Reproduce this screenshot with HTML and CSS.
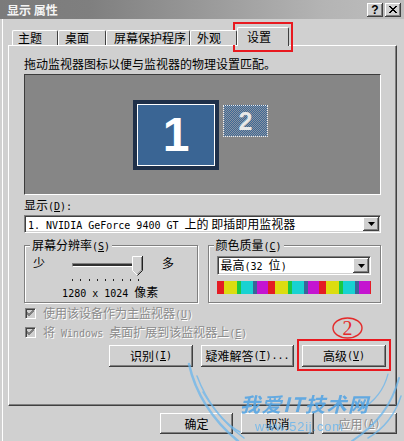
FILE: index.html
```html
<!DOCTYPE html>
<html lang="zh-CN">
<head>
    <meta charset="UTF-8">
    <meta name="viewport" content="width=device-width, initial-scale=1.0">
    <title>显示 属性</title>
    <link rel="stylesheet" href="styles.css">
</head>
<body>
    <div class="window">
        <div class="titlebar">
            <span class="title">显示 属性</span>
            <div class="title-buttons">
                <span class="title-btn">?</span>
                <span class="title-btn">
                    <svg width="8" height="7" viewBox="0 0 8 7"><path d="M0 0 L7 7 M1 0 L8 7 M7 0 L0 7 M8 0 L1 7" stroke="#000" stroke-width="1" fill="none"/></svg>
                </span>
            </div>
        </div>

        <div class="dialog">
            <div class="tabs">
                <div class="tab tab-theme">主题</div>
                <div class="tab tab-desktop">桌面</div>
                <div class="tab tab-saver">屏幕保护程序</div>
                <div class="tab tab-look">外观</div>
                <div class="tab active">设置</div>
            </div>

            <div class="panel">
                <p class="hint">拖动监视器图标以便与监视器的物理设置匹配。</p>

                <div class="preview">
                    <div class="monitor monitor-main">
                        <div class="screen">1</div>
                    </div>
                    <div class="monitor monitor-second">2</div>
                </div>

                <div class="field-label">显示<span class="m">(<u>D</u>):</span></div>
                <div class="combo">
                    <div class="combo-text"><span class="m">1. NVIDIA GeForce 9400 GT </span>上的 即插即用监视器</div>
                    <div class="combo-arrow">
                        <svg width="7" height="4" viewBox="0 0 7 4"><path d="M0 0 H7 L3.5 4 Z" fill="#000"/></svg>
                    </div>
                </div>

                <div class="groups">
                    <div class="group">
                        <div class="group-title">屏幕分辨率<span class="m">(<u>S</u>)</span></div>
                        <div class="slider-row">
                            <span>少</span>
                            <div class="slider">
                                <div class="track"></div>
                                <svg class="thumb" width="11" height="20" viewBox="0 0 11 20">
                                    <path d="M0.5 0.5 H10.5 V14.5 L5.5 19.5 L0.5 14.5 Z" fill="#d0d0d0"/>
                                    <path d="M0.5 14.5 V0.5 H10" stroke="#fff" fill="none"/>
                                    <path d="M0.5 14.5 L5 19" stroke="#fff" fill="none"/>
                                    <path d="M10.5 0 V14.5 L5.5 19.5" stroke="#202020" fill="none"/>
                                    <path d="M9.5 1 V14 L5.5 18" stroke="#808080" fill="none"/>
                                </svg>
                            </div>
                            <span class="more">多</span>
                        </div>
                        <div class="ticks">
                            <span></span><span></span><span></span><span></span><span></span>
                            <span></span><span></span><span></span><span></span>
                        </div>
                        <div class="res-text"><span class="m">1280 x 1024 </span>像素</div>
                    </div>

                    <div class="group">
                        <div class="group-title">颜色质量<span class="m">(<u>C</u>)</span></div>
                        <div class="combo combo-color">
                            <div class="combo-text">最高<span class="m">(32 </span>位<span class="m">)</span></div>
                            <div class="combo-arrow">
                                <svg width="7" height="4" viewBox="0 0 7 4"><path d="M0 0 H7 L3.5 4 Z" fill="#000"/></svg>
                            </div>
                        </div>
                        <div class="colorbar"></div>
                    </div>
                </div>

                <div class="check first">
                    <span class="checkbox">
                        <svg width="7" height="7" viewBox="0 0 7 7"><path d="M0 2 L2 4 L7 -1 M0 3 L2 5 L7 0 M0 4 L2 6 L7 1" stroke="#808080" fill="none"/></svg>
                    </span>
                    <span>使用该设备作为主监视器<span class="m">(<u>U</u>)</span></span>
                </div>
                <div class="check">
                    <span class="checkbox">
                        <svg width="7" height="7" viewBox="0 0 7 7"><path d="M0 2 L2 4 L7 -1 M0 3 L2 5 L7 0 M0 4 L2 6 L7 1" stroke="#808080" fill="none"/></svg>
                    </span>
                    <span>将<span class="m"> Windows </span>桌面扩展到该监视器上<span class="m">(<u>E</u>)</span></span>
                </div>

                <div class="panel-buttons">
                    <button class="btn btn-identify">识别<span class="m">(<u>I</u>)</span></button>
                    <button class="btn btn-trouble">疑难解答<span class="m">(<u>T</u>)...</span></button>
                    <button class="btn btn-advanced">高级<span class="m">(<u>V</u>)</span></button>
                </div>
            </div>

            <div class="dialog-buttons">
                <button class="btn btn-small">确定</button>
                <button class="btn btn-small">取消</button>
                <button class="btn btn-apply disabled">应用<span class="m">(<u>A</u>)</span></button>
            </div>
        </div>

        <!-- annotations drawn on top of the screenshot -->
        <div class="mark mark-tab"></div>
        <div class="mark mark-advanced"></div>
        <svg class="mark-step" width="33" height="24" viewBox="0 0 33 24">
            <ellipse cx="16.5" cy="12" rx="14.5" ry="10" fill="none" stroke="#e42a2a" stroke-width="1.4"/>
            <text x="16.5" y="19" text-anchor="middle" font-family="Liberation Serif, serif" font-size="20" fill="#e42a2a">2</text>
        </svg>

        <svg class="watermark" width="404" height="441" viewBox="0 0 404 441">
            <g stroke="#6bb6ec" fill="none" stroke-linecap="round" opacity="0.75">
                <path d="M189 364 C195 392 212 420 238 441" stroke-width="2.5"/>
                <path d="M197 376 C206 400 222 422 244 438" stroke-width="1.5"/>
                <path d="M203 392 C214 410 228 426 240 432" stroke-width="1.5"/>
                <path d="M399 378 C392 404 378 424 352 441" stroke-width="2"/>
                <path d="M401 396 C395 415 385 428 368 438" stroke-width="1.5"/>
                <path d="M388 374 C384 390 374 402 360 410" stroke-width="1.2"/>
            </g>
            <text x="240" y="412" textLength="128" font-family="Noto Sans CJK SC, sans-serif" font-size="20" font-weight="bold" font-style="italic" fill="#4fa3e4" opacity="0.85">我爱IT技术网</text>
            <text x="255" y="431" textLength="88" font-family="Liberation Sans, sans-serif" font-size="13" fill="#6cb6ec" opacity="0.85">www.52ij.com</text>
        </svg>
    </div>
</body>
</html>
```

FILE: styles.css
```css
* {
    margin: 0;
    padding: 0;
    box-sizing: border-box;
}

body {
    background-color: #d0d0d0;
    font-family: "Noto Sans CJK SC", sans-serif;
    font-size: 12px;
    line-height: 14px;
    color: #000;
    overflow: hidden;
}

.window {
    position: relative;
    width: 404px;
    height: 441px;
}

/* half-width latin text, like the old bitmap font */
.m {
    font-family: "DejaVu Sans Mono", "Liberation Mono", monospace;
    font-size: 10px;
    line-height: 10px;
}

/* title bar */
.titlebar {
    height: 19px;
    display: flex;
    align-items: center;
    justify-content: space-between;
    padding: 0 3px 0 7px;
    background: linear-gradient(to right, #7b7b7b 0%, #7f7f7f 22%, #b4b4b4 80%, #bebebe 100%);
}

.title {
    color: #f4f4f4;
    font-weight: bold;
}

.title-buttons {
    display: flex;
    gap: 2px;
}

.title-btn {
    width: 16px;
    height: 14px;
    display: flex;
    align-items: center;
    justify-content: center;
    background-color: #d0d0d0;
    box-shadow: inset -1px -1px #404040, inset 1px 1px #fff, inset -2px -2px #808080;
    font-family: "Liberation Sans", sans-serif;
    font-weight: bold;
    font-size: 12px;
    line-height: 14px;
}

/* dialog body */
.dialog {
    height: 422px;
    margin-left: 2px;
    padding: 8px 7px 0 5px;
    border-left: 1px solid #fff;
}

.tabs {
    position: relative;
    z-index: 1;
    display: flex;
    align-items: flex-end;
    height: 18px;
    padding-left: 4px;
}

.tab {
    height: 15px;
    padding-left: 5px;
    background-color: #d0d0d0;
    border-top: 1px solid #fff;
    border-left: 1px solid #fff;
    border-right: 1px solid #404040;
    border-radius: 2px 2px 0 0;
    white-space: nowrap;
}

.tab-theme { width: 46px; }
.tab-desktop { width: 48px; padding-left: 6px; }
.tab-saver { width: 84px; padding-left: 7px; }
.tab-look { width: 47px; padding-left: 6px; }

.tab.active {
    width: 52px;
    height: 19px;
    margin-bottom: -1px;
    padding: 2px 0 0 9px;
}

.panel {
    height: 361px;
    padding: 11px 15px 0;
    border-top: 1px solid #fff;
    border-left: 1px solid #fff;
    border-right: 1px solid #404040;
    border-bottom: 1px solid #404040;
    box-shadow: inset -1px -1px #808080;
}

/* monitor arrangement */
.preview {
    position: relative;
    height: 121px;
    margin-top: 3px;
    background-color: #868686;
    border-top: 1px solid #3c3c3c;
    border-left: 1px solid #3c3c3c;
    border-right: 1px solid #fff;
    border-bottom: 1px solid #fff;
}

.monitor {
    position: absolute;
    display: flex;
    font-family: "Liberation Sans", sans-serif;
    font-weight: bold;
}

.monitor-main {
    left: 108px;
    top: 25px;
    width: 86px;
    height: 70px;
    border: 4px solid #1f3049;
}

.monitor-main .screen {
    flex: 1;
    display: flex;
    align-items: center;
    justify-content: center;
    background-color: #3a6594;
    border: 1px solid #fff;
    color: #fff;
    font-size: 48px;
    line-height: 48px;
}

.monitor-second {
    left: 198px;
    top: 30px;
    width: 45px;
    height: 32px;
    align-items: center;
    justify-content: center;
    border: 1px dotted #f0f0f0;
    background: repeating-conic-gradient(#3c6796 0 25%, #8a94a0 0 50%) 0 0 / 2px 2px;
    color: #e8e8e8;
    font-size: 25px;
    line-height: 25px;
}

.field-label {
    margin-top: 3px;
}

/* drop-down lists */
.combo {
    display: flex;
    height: 18px;
    margin-top: 3px;
    padding: 1px;
    background-color: #fff;
    border: 1px solid;
    border-color: #808080 #fff #fff #808080;
    box-shadow: inset 1px 1px #404040, inset -1px -1px #d0d0d0;
}

.combo-text {
    flex: 1;
    padding-left: 2px;
    white-space: nowrap;
}

.combo-arrow {
    width: 16px;
    display: flex;
    align-items: center;
    justify-content: center;
    background-color: #d0d0d0;
    box-shadow: inset -1px -1px #404040, inset 1px 1px #fff, inset -2px -2px #808080;
}

/* group boxes */
.groups {
    display: flex;
    gap: 10px;
    margin-top: 12px;
}

.group {
    flex: 1;
    height: 58px;
    padding: 0 9px 0 8px;
    border: 1px solid #808080;
    box-shadow: inset 1px 1px #fff, 1px 1px #fff;
}

.group-title {
    width: fit-content;
    margin: -8px 0 0 -3px;
    padding: 0 2px;
    background-color: #d0d0d0;
}

.slider-row {
    display: flex;
    align-items: flex-start;
    height: 20px;
    margin-top: 4px;
}

.slider {
    position: relative;
    width: 71px;
    height: 20px;
    margin-left: 27px;
}

.track {
    width: 70px;
    height: 4px;
    margin-top: 7px;
    background-color: #303030;
    border-top: 1px solid #808080;
    border-left: 1px solid #808080;
    border-bottom: 1px solid #fff;
    border-right: 1px solid #fff;
}

.thumb {
    position: absolute;
    right: 0;
    top: 0;
}

.more {
    margin-left: 19px;
}

.ticks {
    display: flex;
    justify-content: space-between;
    width: 67px;
    height: 2px;
    margin: 3px 0 0 39px;
}

.ticks span {
    width: 1px;
    height: 2px;
    background-color: #202020;
}

.res-text {
    margin-top: 4px;
    text-align: center;
}

.combo-color {
    height: 19px;
    margin-top: 4px;
}

.colorbar {
    height: 13px;
    margin-top: 6px;
    background: repeating-linear-gradient(to right,
        #e41c24 0 7px, #dcdc10 7px 20px, #1cc844 20px 24px,
        #18d2d2 24px 36px, #3a6598 36px 40px, #c414d0 40px 51px);
}

/* check boxes */
.check {
    display: flex;
    align-items: flex-start;
    height: 19px;
    padding-left: 1px;
    color: #8c8c8c;
    text-shadow: 1px 1px #fff;
    white-space: nowrap;
}

.check.first {
    margin-top: 3px;
}

.checkbox {
    width: 11px;
    height: 11px;
    margin: 2px 7px 0 0;
    display: flex;
    align-items: center;
    justify-content: center;
    background-color: #d0d0d0;
    border: 1px solid;
    border-color: #808080 #fff #fff #808080;
    box-shadow: inset 1px 1px #404040;
}

/* buttons */
.btn {
    display: flex;
    align-items: center;
    justify-content: center;
    font: inherit;
    color: #000;
    background-color: #d0d0d0;
    border: none;
    box-shadow: inset -1px -1px #404040, inset 1px 1px #fff, inset -2px -2px #808080;
    white-space: nowrap;
}

.btn.disabled {
    color: #8c8c8c;
    text-shadow: 1px 1px #fff;
}

.panel-buttons {
    display: flex;
    justify-content: flex-end;
    gap: 8px;
    margin: 1px -5px 0 0;
}

.panel-buttons .btn {
    height: 22px;
}

.btn-identify { width: 84px; }
.btn-trouble { width: 93px; }
.btn-advanced { width: 84px; }

.dialog-buttons {
    display: flex;
    justify-content: flex-end;
    gap: 8px;
    margin-top: 7px;
}

.dialog-buttons .btn {
    height: 21px;
}

.btn-small { width: 73px; }
.btn-apply { width: 75px; }

/* red annotations and watermark */
.mark {
    position: absolute;
    border: 2px solid #e8191f;
    pointer-events: none;
}

.mark-tab {
    left: 233px;
    top: 22px;
    width: 60px;
    height: 30px;
}

.mark-advanced {
    left: 297px;
    top: 339px;
    width: 94px;
    height: 32px;
}

.mark-step {
    position: absolute;
    left: 331px;
    top: 316px;
}

.watermark {
    position: absolute;
    left: 0;
    top: 0;
    pointer-events: none;
}
```
